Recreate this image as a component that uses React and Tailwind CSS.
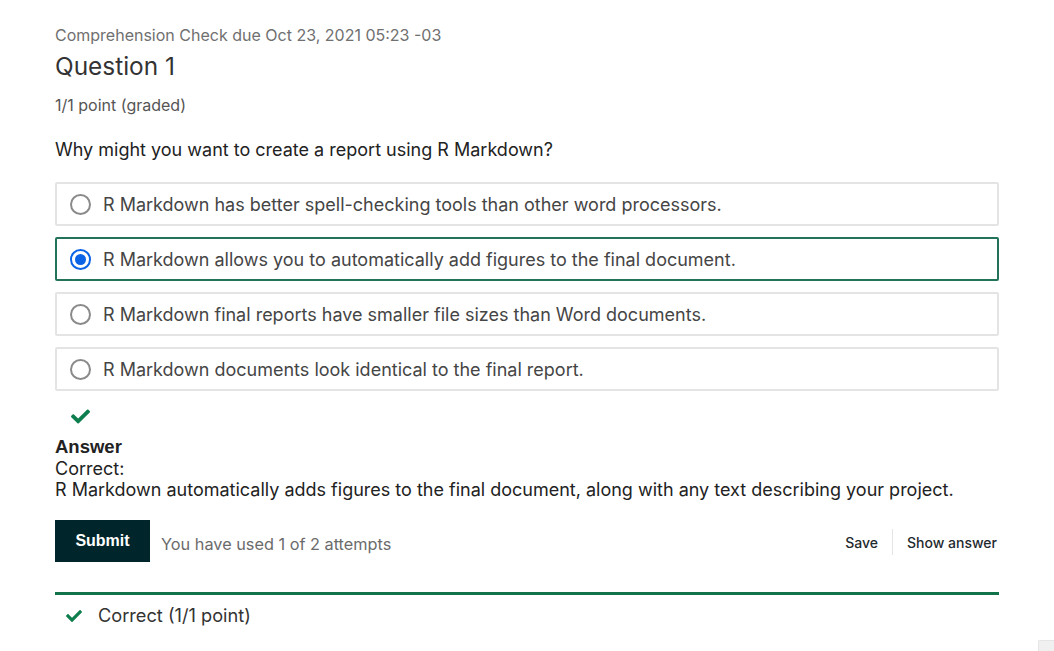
import { useState } from "react";

const options = [
  "R Markdown has better spell-checking tools than other word processors.",
  "R Markdown allows you to automatically add figures to the final document.",
  "R Markdown final reports have smaller file sizes than Word documents.",
  "R Markdown documents look identical to the final report.",
];

// font-awesome style check
const Check = ({ className }) => (
  <svg viewBox="0 0 512 512" className={className} fill="currentColor">
    <path d="M173.898 439.404l-166.4-166.4c-9.997-9.997-9.997-26.206 0-36.204l36.203-36.204c9.997-9.998 26.207-9.998 36.204 0L192 312.69 432.095 72.596c9.997-9.997 26.207-9.997 36.204 0l36.203 36.204c9.997 9.997 9.997 26.206 0 36.204l-294.4 294.401c-9.998 9.997-26.207 9.997-36.204-.001z" />
  </svg>
);

const Radio = ({ checked }) =>
  checked ? (
    <span className="w-[21px] h-[21px] rounded-full border-[2px] border-[#0b63e5] flex items-center justify-center shrink-0">
      <span className="w-[11px] h-[11px] rounded-full bg-[#0b63e5]" />
    </span>
  ) : (
    <span className="w-[21px] h-[21px] rounded-full border-[2px] border-[#8a8a8a] shrink-0" />
  );

export default function App() {
  const [selected] = useState(1);

  return (
    <div className="relative w-[1054px] h-[651px] overflow-hidden bg-white font-['Inter',sans-serif]">
      <div className="ml-[55px] w-[944px] pt-[26px]">
        <div className="text-[16px] text-[#707070] leading-[18px]">
          Comprehension Check due Oct 23, 2021 05:23 -03
        </div>
        <h2 className="text-[24.4px] text-[#333] leading-[30px] mt-[7px]">Question 1</h2>
        <div className="text-[16px] text-[#555] leading-[20px] mt-[14px]">1/1 point (graded)</div>
        <p className="text-[18px] text-[#222] leading-[22px] mt-[24px]">
          Why might you want to create a report using R Markdown?
        </p>

        <div className="mt-[21px] flex flex-col gap-[11px]">
          {options.map((opt, i) => (
            <label
              key={i}
              className={`h-[44px] flex items-center gap-[12px] pl-[13px] rounded-[2px] text-[18px] text-[#454545] ${
                i === selected ? "border-[2px] border-[#23735a]" : "border-[2px] border-[#e4e4e4]"
              }`}
            >
              <Radio checked={i === selected} />
              <span>{opt}</span>
            </label>
          ))}
        </div>

        <Check className="w-[19px] h-[19px] text-[#0e7e4e] ml-[16px] mt-[16px]" />

        <div className="mt-[10px] text-[18px] leading-[21.5px] text-[#222]">
          <div className="font-bold font-['Liberation_Sans',sans-serif] text-[18.5px]">Answer</div>
          <div>Correct:</div>
          <div>R Markdown automatically adds figures to the final document, along with any text describing your project.</div>
        </div>

        <div className="mt-[19px] flex items-center">
          <button className="w-[95px] h-[42px] bg-[#00262b] text-white font-bold text-[16px] font-['Liberation_Sans',sans-serif]">
            Submit
          </button>
          <span className="ml-[11px] mt-[7px] text-[16.3px] text-[#6b6b6b]">You have used 1 of 2 attempts</span>
          <div className="ml-auto mt-[3px] flex items-center text-[14px] font-medium text-[#1f2a2e]">
            <span className="px-[14px]">Save</span>
            <span className="w-px h-[26px] bg-[#e5e5e5]" />
            <span className="pl-[14px] pr-[2px]">Show answer</span>
          </div>
        </div>

        <div className="mt-[30px] h-[3px] bg-[#127249]" />
        <div className="mt-[10px] h-[22px] flex items-center text-[18.2px] text-[#333]">
          <Check className="w-[16px] h-[16px] text-[#0e7e4e] ml-[11px]" />
          <span className="ml-[16px]">Correct (1/1 point)</span>
        </div>
      </div>
      <div className="absolute right-0 bottom-0 w-[16px] h-[11px] bg-[#f0f0f0] border-l border-t border-[#e5e5e5] rounded-tl-[2px]" />
    </div>
  );
}
